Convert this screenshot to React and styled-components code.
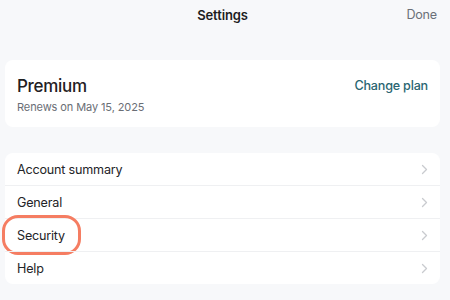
import React from "react";
import styled, { createGlobalStyle } from "styled-components";

const Global = createGlobalStyle`
  body {
    margin: 0;
    background: #f7f8fa;
    font-family: Inter, "Noto Sans", sans-serif;
    -webkit-font-smoothing: antialiased;
  }
`;

const Page = styled.div`
  width: 450px;
  height: 300px;
  padding: 0 10px 0 5px;
  box-sizing: border-box;
  display: flex;
  flex-direction: column;
`;

const Header = styled.div`
  height: 29px;
  display: grid;
  grid-template-columns: 1fr auto 1fr;
  align-items: center;
  margin-bottom: 31px;
`;

const Title = styled.div`
  grid-column: 2;
  font-size: 13px;
  font-weight: 600;
  color: #1c1d1f;
  letter-spacing: -0.1px;
`;

const Done = styled.div`
  justify-self: end;
  margin-right: 3px;
  font-size: 12.6px;
  letter-spacing: -0.2px;
  color: #6b7078;
`;

const Card = styled.div`
  background: #fff;
  border-radius: 8px;
  margin-bottom: ${p => p.gap || 0}px;
`;

const PlanCard = styled(Card)`
  height: 67px;
  box-sizing: border-box;
  padding: 12px 12px 0 12px;
  display: flex;
  justify-content: space-between;
  align-items: flex-start;
`;

const PlanName = styled.div`
  font-size: 17px;
  font-weight: 500;
  letter-spacing: -0.3px;
  color: #1f2023;
  line-height: 28px;
`;

const Renews = styled.div`
  font-size: 11px;
  letter-spacing: -0.1px;
  color: #6a6e75;
  line-height: 15px;
`;

const Link = styled.div`
  font-size: 12.6px;
  font-weight: 500;
  letter-spacing: -0.2px;
  color: #2a6571;
  line-height: 28px;
`;

const Row = styled.div`
  position: relative;
  height: 32px;
  padding: 0 12px;
  display: flex;
  align-items: center;
  justify-content: space-between;
  font-size: 12.6px;
  letter-spacing: -0.2px;
  color: #232428;
  & + & {
    border-top: 1px solid #eff0f2;
  }
`;

const Ring = styled.div`
  position: absolute;
  left: -3px;
  top: -4px;
  width: 79px;
  height: 40px;
  box-sizing: border-box;
  border: 3px solid #f57d62;
  border-radius: 16px;
`;

const Chevron = () => (
  <svg width="7" height="11" viewBox="0 0 7 11" fill="none">
    <path d="M1.5 1.5 L5.5 5.5 L1.5 9.5" stroke="#c9cbcf" strokeWidth="1.3" strokeLinecap="round" strokeLinejoin="round" />
  </svg>
);

const items = ["Account summary", "General", "Security", "Help"];

export default function App() {
  return (
    <Page>
      <Global />
      <Header>
        <Title>Settings</Title>
        <Done>Done</Done>
      </Header>
      <PlanCard gap={26}>
        <div>
          <PlanName>Premium</PlanName>
          <Renews>Renews on May 15, 2025</Renews>
        </div>
        <Link>Change plan</Link>
      </PlanCard>
      <Card>
        {items.map(item => (
          <Row key={item}>
            {item === "Security" && <Ring />}
            <span>{item}</span>
            <Chevron />
          </Row>
        ))}
      </Card>
    </Page>
  );
}
